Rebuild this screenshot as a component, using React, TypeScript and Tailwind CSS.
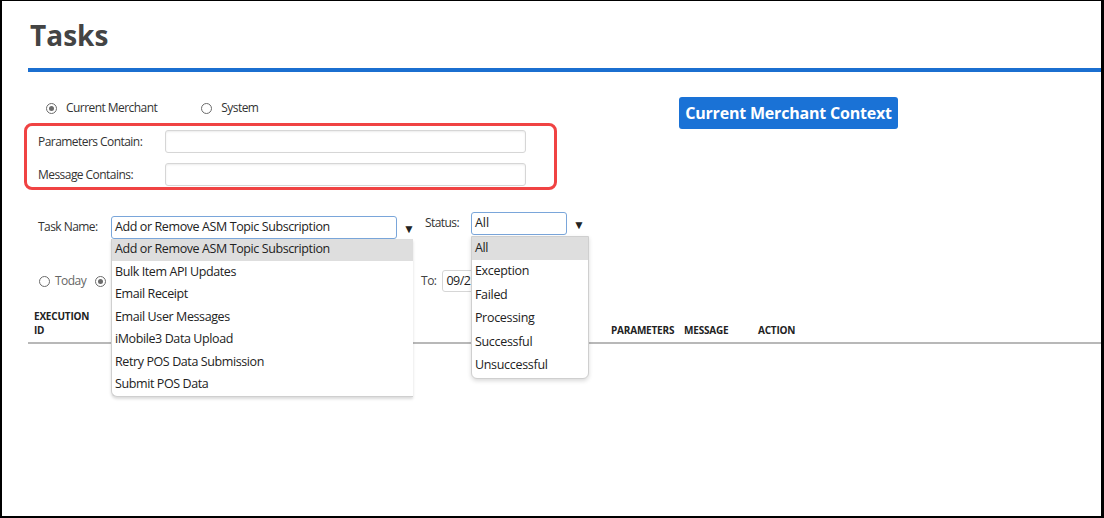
import React from "react";

const taskOptions = [
  "Add or Remove ASM Topic Subscription",
  "Bulk Item API Updates",
  "Email Receipt",
  "Email User Messages",
  "iMobile3 Data Upload",
  "Retry POS Data Submission",
  "Submit POS Data",
];

const statusOptions = ["All", "Exception", "Failed", "Processing", "Successful", "Unsuccessful"];

// Small grey radio like the legacy admin screens
const Radio: React.FC<{ checked?: boolean }> = ({ checked }) => (
  <span className="w-[11px] h-[11px] rounded-full border-[1.5px] border-[#6b6b6b] flex items-center justify-center bg-white shrink-0">
    {checked && <span className="w-[5px] h-[5px] rounded-full bg-[#6b6b6b]" />}
  </span>
);

const Arrow: React.FC = () => <span className="text-[12px] leading-none text-[#222]">▼</span>;

const App: React.FC = () => {
  return (
    <div
      className="w-[1104px] h-[518px] bg-white border-l-2 border-t border-r-[3px] border-b-2 border-black overflow-hidden text-[#333]"
      style={{ fontFamily: '"Open Sans", "Noto Sans", sans-serif' }}
    >
      {/* Header */}
      <div className="pl-[26px] pt-[19px]">
        <h1 className="text-[28px] leading-[30px] font-bold text-[#444] pl-[2px]">Tasks</h1>
        <div className="mt-[18px] h-[4px] bg-[#1b6fd0]" />
      </div>

      {/* Filters */}
      <div className="pl-[22px]">
        <div className="flex items-start">
          <div className="w-[533px]">
            <div className="mt-[28px] h-[16px] flex items-center text-[12px] tracking-[-0.55px] pl-[22px]">
              <Radio checked />
              <span className="ml-[9px]">Current Merchant</span>
              <span className="ml-[44px]">
                <Radio />
              </span>
              <span className="ml-[9px]">System</span>
            </div>
            <div className="mt-[7px] border-[3px] border-[#f04343] rounded-[8px] pt-[4px] pb-[1px] pl-[11px]">
              <div className="flex items-center">
                <span className="w-[127px] text-[12px] tracking-[-0.55px]">Parameters Contain:</span>
                <input className="w-[361px] h-[23px] border border-[#d6d6d6] rounded-[3px] shadow-[inset_0_1px_2px_rgba(0,0,0,0.08)]" />
              </div>
              <div className="flex items-center mt-[10px]">
                <span className="w-[127px] text-[12px] tracking-[-0.55px]">Message Contains:</span>
                <input className="w-[361px] h-[23px] border border-[#d6d6d6] rounded-[3px] shadow-[inset_0_1px_2px_rgba(0,0,0,0.08)]" />
              </div>
            </div>
          </div>
          <button className="ml-[122px] mt-[25px] w-[219px] h-[32px] rounded-[3px] bg-[#1a72d6] text-white text-[16px] font-bold tracking-[-0.2px]">
            Current Merchant Context
          </button>
        </div>

        {/* Task name / status row */}
        <div className="flex items-start mt-[21px] pl-[14px] relative z-10">
          <div className="flex items-center mt-[4px]">
            <span className="w-[73px] text-[12px] tracking-[-0.55px]">Task Name:</span>
            <div className="relative">
              <div className="w-[286px] h-[23px] border border-[#7aa6da] rounded-[3px] flex items-center pl-[3px] text-[12.5px] tracking-[-0.4px] text-[#222]">
                Add or Remove ASM Topic Subscription
              </div>
              <div className="absolute left-0 top-[23px] w-[302px] bg-white border-l border-b border-[#cfcfcf] rounded-bl-[6px] shadow-[0_2px_3px_rgba(0,0,0,0.15)]">
                {taskOptions.map((o, i) => (
                  <div
                    key={o}
                    className={`h-[22.5px] flex items-center pl-[3px] text-[12.5px] tracking-[-0.4px] text-[#222] ${i === 0 ? "bg-[#dedede]" : ""}`}
                  >
                    {o}
                  </div>
                ))}
              </div>
            </div>
            <span className="ml-[6px]">
              <Arrow />
            </span>
          </div>
          <div className="flex items-center ml-[10px]">
            <span className="w-[46px] text-[12px] tracking-[-0.55px]">Status:</span>
            <div className="relative">
              <div className="w-[96px] h-[23px] border border-[#7aa6da] rounded-[3px] flex items-center pl-[3px] text-[12.5px] text-[#222]">
                All
              </div>
              <div className="absolute left-0 top-[24px] w-[118px] bg-white border border-[#cfcfcf] rounded-b-[6px] shadow-[0_2px_4px_rgba(0,0,0,0.15)] overflow-hidden">
                {statusOptions.map((o, i) => (
                  <div
                    key={o}
                    className={`h-[23.5px] flex items-center pl-[3px] text-[12.5px] tracking-[-0.3px] text-[#222] ${i === 0 ? "bg-[#dedede]" : ""}`}
                  >
                    {o}
                  </div>
                ))}
              </div>
            </div>
            <span className="ml-[6px]">
              <Arrow />
            </span>
          </div>
        </div>
      </div>

      {/* Date row */}
      <div className="pl-[26px] mt-[31px] flex items-center h-[22px] text-[12px] tracking-[-0.55px]">
        <span className="ml-[11px]">
          <Radio />
        </span>
        <span className="ml-[5px] text-[#666]">Today</span>
        <span className="ml-[9px]">
          <Radio checked />
        </span>
        <span className="ml-[315px] text-[#444]">To:</span>
        <div className="ml-[6px] w-[80px] h-[22px] border border-[#d6d6d6] rounded-[3px] flex items-center pl-[3px] text-[12.5px] text-[#222]">
          09/2
        </div>
      </div>

      {/* Table header */}
      <div className="ml-[26px] mt-[17px] border-b-2 border-[#b8b8b8] flex items-end pb-[5px] text-[10px] leading-[14px] font-bold text-[#222] tracking-[-0.2px]">
        <span className="w-[70px] pl-[6px]">EXECUTION ID</span>
        <span className="ml-[513px] w-[73px]">PARAMETERS</span>
        <span className="w-[74px]">MESSAGE</span>
        <span>ACTION</span>
      </div>
    </div>
  );
};

export default App;
